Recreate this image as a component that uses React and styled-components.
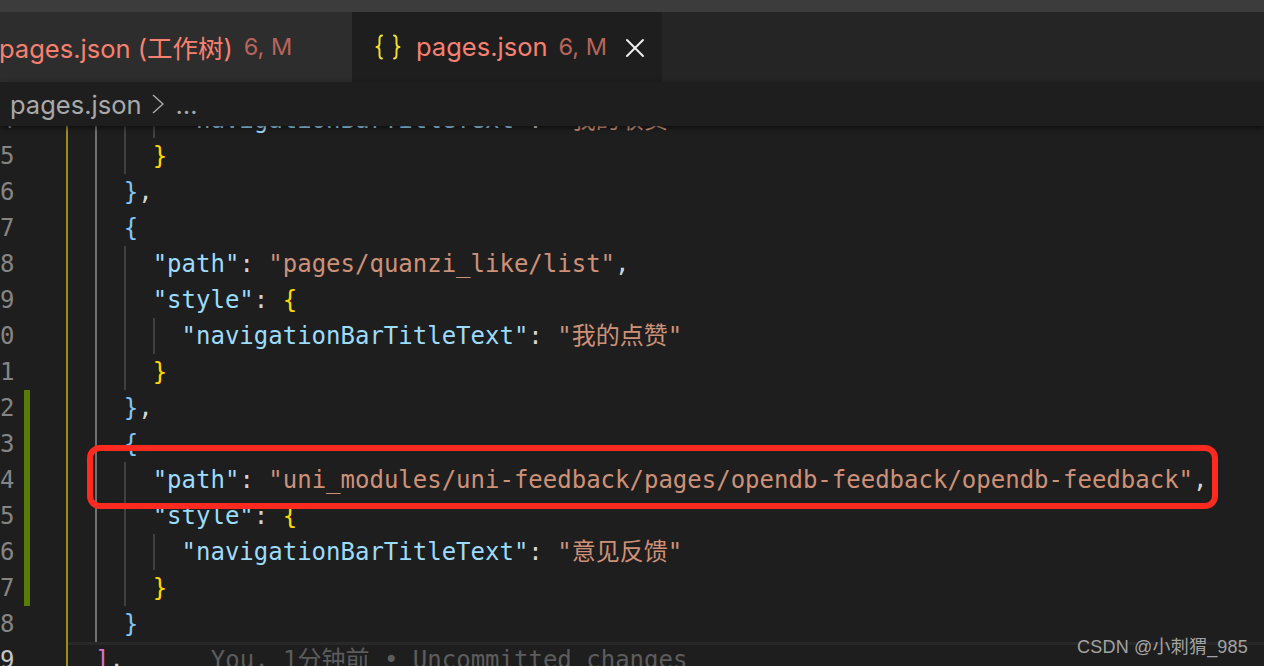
import React from 'react'
import styled, { createGlobalStyle } from 'styled-components'
import { X } from 'lucide-react'

const Global = createGlobalStyle`
  html, body {
    margin: 0;
    height: 100%;
    overflow: hidden;
    background: #1e1e1e;
  }
`

const C = {
  key: '#9cdcfe',
  str: '#ce9178',
  punct: '#d4d4d4',
  gold: '#ffd700',
  blue: '#80c5f5',
  purple: '#da70d6',
}

const nav = (title) => [
  ['"navigationBarTitleText"', C.key],
  [': ', C.punct],
  [`"${title}"`, C.str],
]

const lines = [
  { n: 4, depth: 4, code: nav('我的收货') },
  { n: 5, depth: 3, code: [['}', C.gold]] },
  { n: 6, depth: 2, code: [['}', C.blue], [',', C.punct]] },
  { n: 7, depth: 2, code: [['{', C.blue]] },
  { n: 8, depth: 3, code: [['"path"', C.key], [': ', C.punct], ['"pages/quanzi_like/list"', C.str], [',', C.punct]] },
  { n: 9, depth: 3, code: [['"style"', C.key], [': ', C.punct], ['{', C.gold]] },
  { n: 0, depth: 4, code: nav('我的点赞') },
  { n: 1, depth: 3, code: [['}', C.gold]] },
  { n: 2, depth: 2, git: true, code: [['}', C.blue], [',', C.punct]] },
  { n: 3, depth: 2, git: true, code: [['{', C.blue]] },
  { n: 4, depth: 3, git: true, code: [['"path"', C.key], [': ', C.punct], ['"uni_modules/uni-feedback/pages/opendb-feedback/opendb-feedback"', C.str], [',', C.punct]] },
  { n: 5, depth: 3, git: true, code: [['"style"', C.key], [': ', C.punct], ['{', C.gold]] },
  { n: 6, depth: 4, git: true, code: nav('意见反馈') },
  { n: 7, depth: 3, git: true, code: [['}', C.gold]] },
  { n: 8, depth: 2, code: [['}', C.blue]] },
  { n: 9, depth: 1, current: true, code: [[']', C.purple], [',', C.punct]], blame: 'You, 1分钟前 • Uncommitted changes' },
]

const Window = styled.div`
  position: relative;
  height: 666px;
  overflow: hidden;
  display: flex;
  flex-direction: column;
  background: #1e1e1e;
  font-family: Inter, "Noto Sans CJK SC", sans-serif;
`

const TitleStrip = styled.div`
  height: 12px;
  flex: none;
  background: #3c3c3c;
`

const TabBar = styled.div`
  height: 70px;
  flex: none;
  display: flex;
  background: #252526;
`

const Tab = styled.div`
  display: flex;
  align-items: center;
  width: ${(p) => p.$width}px;
  padding-left: ${(p) => p.$pad}px;
  padding-bottom: 2px;
  box-sizing: border-box;
  background: ${(p) => (p.$active ? '#1e1e1e' : '#2d2d2d')};
`

const TabIcon = styled.svg`
  width: 26px;
  height: 26px;
  margin-right: 15px;
  margin-top: 2px;
  flex: none;
  fill: none;
  stroke: #f0dc28;
  stroke-width: 2;
  stroke-linecap: round;
  stroke-linejoin: round;
`

const TabName = styled.span`
  font-size: 25.5px;
  margin-left: ${(p) => p.$shift || 0}px;
  color: #f88070;
  white-space: nowrap;
`

const TabBadge = styled.span`
  margin-left: 11px;
  font-size: 23.5px;
  color: #b9645a;
  white-space: nowrap;
`

const CloseBtn = styled.span`
  display: flex;
  margin: 4px 0 0 12px;
  color: #f0f0f0;
`

const Crumbs = styled.div`
  position: relative;
  z-index: 2;
  height: 44px;
  flex: none;
  display: flex;
  align-items: center;
  padding-left: 10px;
  gap: 11px;
  background: #1e1e1e;
  color: #a9a9a9;
  font-size: 25.5px;
  box-shadow: 0 2px 5px rgba(0, 0, 0, 0.55);
`

const Chevron = styled.svg`
  width: 12px;
  height: 20px;
  flex: none;
  fill: none;
  stroke: #a9a9a9;
  stroke-width: 1.5;
`

const Editor = styled.div`
  position: relative;
  flex: 1;
  overflow: hidden;
`

const Lines = styled.div`
  margin-top: -24px;
`

const Row = styled.div`
  display: flex;
  height: 36px;
  font-family: "DejaVu Sans Mono", "Noto Sans CJK SC", monospace;
  font-size: 24px;
  line-height: 36px;
  white-space: pre;
`

const LineNo = styled.span`
  width: 14px;
  flex: none;
  overflow: hidden;
  color: ${(p) => (p.$current ? '#c6c6c6' : '#858585')};
`

const GitMark = styled.span`
  width: 6px;
  flex: none;
  margin: 0 36px 0 10px;
  background: ${(p) => (p.$on ? '#587c0c' : 'transparent')};
`

const Code = styled.div`
  flex: 1;
  display: flex;
  box-shadow: ${(p) => (p.$current ? 'inset 0 3px 0 #282828' : 'none')};
`

const Guide = styled.span`
  width: 28.9px;
  flex: none;
  box-sizing: border-box;
  border-left: 2px solid ${(p) => p.$color};
`

const Token = styled.span`
  color: ${(p) => p.$color};
`

const Blame = styled.span`
  margin-left: 87px;
  color: #5c5c5c;
`

const Highlight = styled.div`
  position: absolute;
  left: 87px;
  top: 319px;
  width: 1131px;
  height: 64px;
  box-sizing: border-box;
  border: 6px solid #ff2a1f;
  border-radius: 13px;
  pointer-events: none;
`

const Watermark = styled.div`
  position: absolute;
  right: 16px;
  bottom: 8px;
  font-family: "Liberation Sans", "Noto Sans CJK SC", sans-serif;
  font-size: 18px;
  letter-spacing: 0.2px;
  color: #a3a3a3;
`

const guideColors = ['#a08c1c', '#707070', '#404040', '#404040']

export default function App() {
  return (
    <Window>
      <Global />
      <TitleStrip />
      <TabBar>
        <Tab $width={352} $pad={0}>
          <TabName $shift={-1}>pages.json (工作树)</TabName>
          <TabBadge>6, M</TabBadge>
        </Tab>
        <Tab $active $width={310} $pad={23}>
          <TabIcon viewBox="0 0 26 26">
            <path d="M7 1.5C4.5 1.5 4.5 3 4.5 5v4.5C4.5 11.5 3.5 13 1.5 13c2 0 3 1.5 3 3.5V21c0 2 0 3.5 2.5 3.5" />
            <path d="M19 1.5c2.5 0 2.5 1.5 2.5 3.5v4.5c0 2 1 3.5 3 3.5-2 0-3 1.5-3 3.5V21c0 2 0 3.5-2.5 3.5" />
          </TabIcon>
          <TabName>pages.json</TabName>
          <TabBadge>6, M</TabBadge>
          <CloseBtn><X size={32} strokeWidth={1.5} /></CloseBtn>
        </Tab>
      </TabBar>
      <Crumbs>
        <span>pages.json</span>
        <Chevron viewBox="0 0 12 20">
          <path d="M1 1l10 9-10 9" />
        </Chevron>
        <span>…</span>
      </Crumbs>
      <Editor>
        <Lines>
          {lines.map((line, i) => (
            <Row key={i}>
              <LineNo $current={line.current}>{line.n}</LineNo>
              <GitMark $on={line.git} />
              <Code $current={line.current}>
                {guideColors.slice(0, line.depth).map((color, g) => (
                  <Guide key={g} $color={color} />
                ))}
                {line.code.map(([text, color], t) => (
                  <Token key={t} $color={color}>{text}</Token>
                ))}
                {line.blame && <Blame>{line.blame}</Blame>}
              </Code>
            </Row>
          ))}
        </Lines>
        <Highlight />
      </Editor>
      <Watermark>CSDN @小刺猬_985</Watermark>
    </Window>
  )
}
